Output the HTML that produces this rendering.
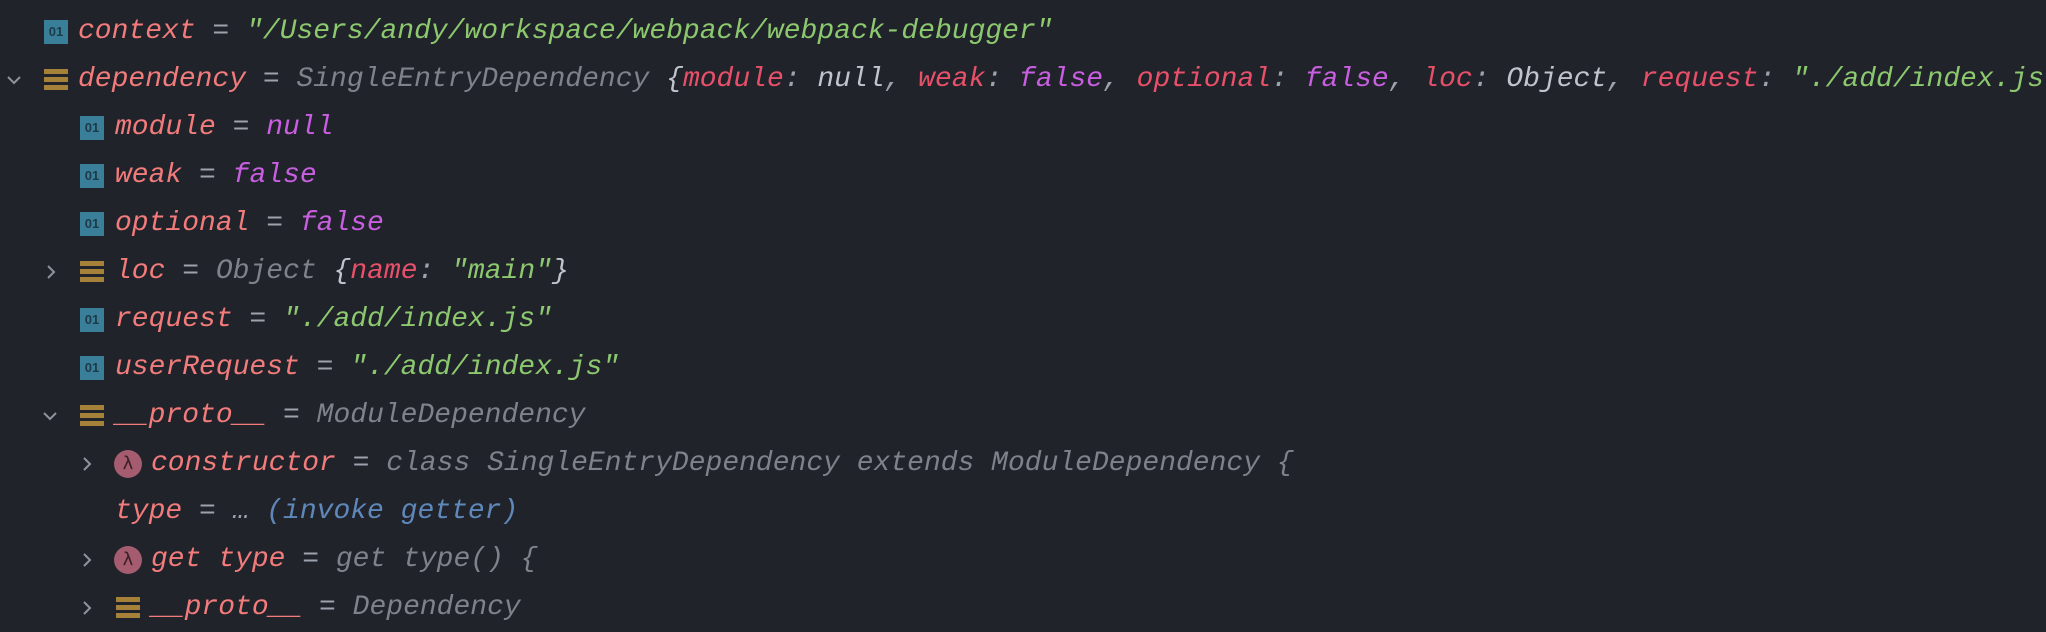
<!DOCTYPE html>
<html><head><meta charset="utf-8"><style>
html,body{margin:0;padding:0;background:#21232b;width:2046px;height:632px;overflow:hidden}
.r{position:absolute;left:0;height:48px;line-height:48px;white-space:nowrap;font-family:"Liberation Mono",monospace;font-size:28px;font-style:italic;color:#9da3ad}
.n{color:#f27b7b}.k{color:#e8506a}.g{color:#8cc86e}.p{color:#c85ee0}.c{color:#7e828a}.w{color:#bfc4cd}.b{color:#5f88ba}
.t{position:absolute;top:0}
.ic{position:absolute;top:12px;width:24px;height:24px;background:#3a7f9a;color:#1d3a47;font:bold 13px "Liberation Sans",sans-serif;font-style:normal;line-height:24px;text-align:center}
.st{position:absolute;top:13px;width:24px;height:22px}
.st i{position:absolute;left:0;width:24px;height:5px;background:#a6813a}
.lm{position:absolute;top:10px;width:28px;height:28px;border-radius:50%;background:#a45c6e;color:#3a1f25;font:18px "DejaVu Sans",sans-serif;line-height:28px;text-align:center}
.ar{position:absolute;top:16px;width:16px;height:16px}
</style></head><body>
<svg width="0" height="0" style="position:absolute"><defs>
<symbol id="dn" viewBox="0 0 16 16"><path d="M2 5 L8 11 L14 5" fill="none" stroke="#8e939c" stroke-width="2"/></symbol>
<symbol id="rt" viewBox="0 0 16 16"><path d="M5 2 L11 8 L5 14" fill="none" stroke="#8e939c" stroke-width="2"/></symbol>
</defs></svg>

<div class="r" style="top:8px;width:2046px"><div class="ic" style="left:44px">01</div><span class="t" style="left:78px"><span class="n">context</span> = <span class="g">"/Users/andy/workspace/webpack/webpack-debugger"</span></span></div>

<div class="r" style="top:56px;width:2046px"><svg class="ar" style="left:6px"><use href="#dn"/></svg><div class="st" style="left:44px"><i style="top:0"></i><i style="top:8px"></i><i style="top:16px"></i></div><span class="t" style="left:78px"><span class="n">dependency</span> = <span class="c">SingleEntryDependency</span> <span class="w">{</span><span class="k">module</span>: <span class="w">null</span>, <span class="k">weak</span>: <span class="p">false</span>, <span class="k">optional</span>: <span class="p">false</span>, <span class="k">loc</span>: <span class="w">Object</span>, <span class="k">request</span>: <span class="g">"./add/index.js"</span></span></div>

<div class="r" style="top:104px;width:2046px"><div class="ic" style="left:80px">01</div><span class="t" style="left:115px"><span class="n">module</span> = <span class="p">null</span></span></div>
<div class="r" style="top:152px;width:2046px"><div class="ic" style="left:80px">01</div><span class="t" style="left:115px"><span class="n">weak</span> = <span class="p">false</span></span></div>
<div class="r" style="top:200px;width:2046px"><div class="ic" style="left:80px">01</div><span class="t" style="left:115px"><span class="n">optional</span> = <span class="p">false</span></span></div>
<div class="r" style="top:248px;width:2046px"><svg class="ar" style="left:43px"><use href="#rt"/></svg><div class="st" style="left:80px"><i style="top:0"></i><i style="top:8px"></i><i style="top:16px"></i></div><span class="t" style="left:115px"><span class="n">loc</span> = <span class="c">Object</span> <span class="w">{</span><span class="k">name</span>: <span class="g">"main"</span><span class="w">}</span></span></div>
<div class="r" style="top:296px;width:2046px"><div class="ic" style="left:80px">01</div><span class="t" style="left:115px"><span class="n">request</span> = <span class="g">"./add/index.js"</span></span></div>
<div class="r" style="top:344px;width:2046px"><div class="ic" style="left:80px">01</div><span class="t" style="left:115px"><span class="n">userRequest</span> = <span class="g">"./add/index.js"</span></span></div>
<div class="r" style="top:392px;width:2046px"><svg class="ar" style="left:42px"><use href="#dn"/></svg><div class="st" style="left:80px"><i style="top:0"></i><i style="top:8px"></i><i style="top:16px"></i></div><span class="t" style="left:115px"><span class="n">__proto__</span> = <span class="c">ModuleDependency</span></span></div>
<div class="r" style="top:440px;width:2046px"><svg class="ar" style="left:79px"><use href="#rt"/></svg><div class="lm" style="left:114px">λ</div><span class="t" style="left:151px"><span class="n">constructor</span> = <span class="c">class SingleEntryDependency extends ModuleDependency {</span></span></div>
<div class="r" style="top:488px;width:2046px"><span class="t" style="left:115px"><span class="n">type</span> = … <span class="b">(invoke getter)</span></span></div>
<div class="r" style="top:536px;width:2046px"><svg class="ar" style="left:79px"><use href="#rt"/></svg><div class="lm" style="left:114px">λ</div><span class="t" style="left:151px"><span class="n">get type</span> = <span class="c">get type() {</span></span></div>
<div class="r" style="top:584px;width:2046px"><svg class="ar" style="left:79px"><use href="#rt"/></svg><div class="st" style="left:116px"><i style="top:0"></i><i style="top:8px"></i><i style="top:16px"></i></div><span class="t" style="left:151px"><span class="n">__proto__</span> = <span class="c">Dependency</span></span></div>
</body></html>
